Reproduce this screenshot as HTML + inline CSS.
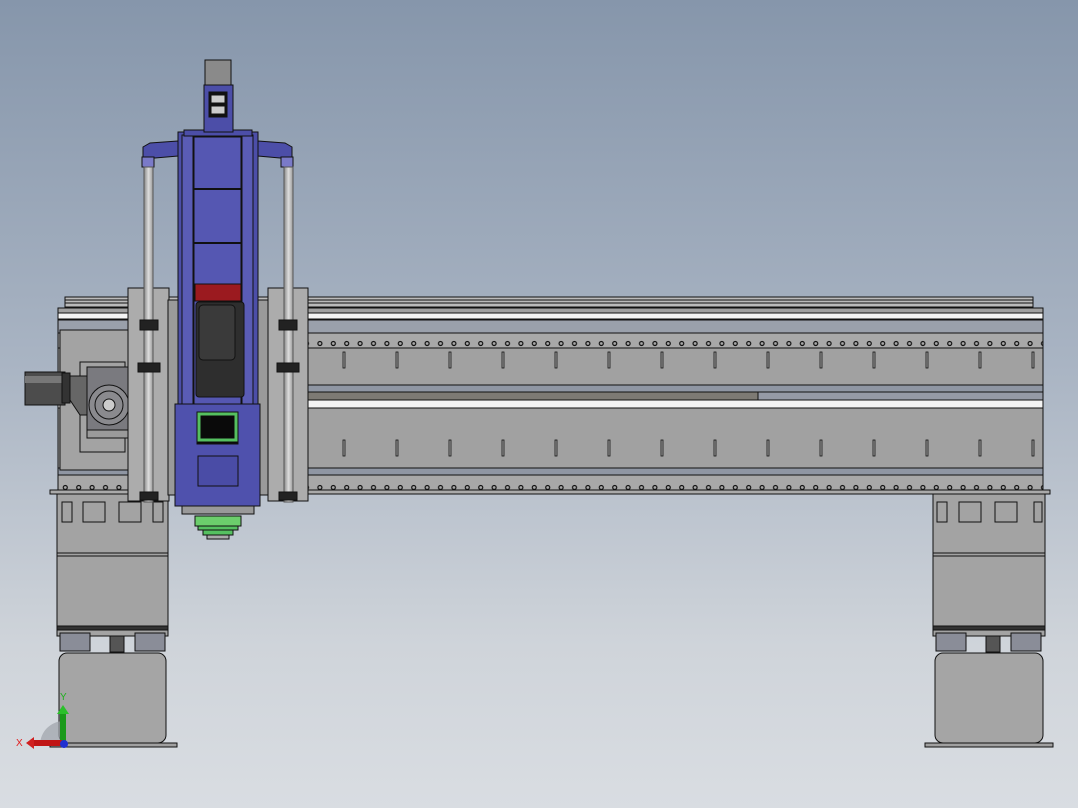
<!DOCTYPE html>
<html><head><meta charset="utf-8"><style>
html,body{margin:0;padding:0;width:1078px;height:808px;overflow:hidden}
body{background:linear-gradient(#8696ab 0%,#a9b4c3 45%,#cfd4da 80%,#d9dde2 100%)}
svg{position:absolute;left:0;top:0}
text{font-family:"Liberation Sans",sans-serif}
</style></head><body>
<svg width="1078" height="808" viewBox="0 0 1078 808">
<defs>
<pattern id="holes" x="5" y="0" width="13.4" height="16" patternUnits="userSpaceOnUse">
<circle cx="6.7" cy="7.5" r="2" fill="none" stroke="#111" stroke-width="1.2"/>
</pattern>
<pattern id="slots" x="0" y="349" width="53" height="36" patternUnits="userSpaceOnUse">
<rect x="25" y="3" width="2" height="16" fill="none" stroke="#111" stroke-width="0.8"/>
</pattern>
<pattern id="slots2" x="0" y="408" width="53" height="60" patternUnits="userSpaceOnUse">
<rect x="25" y="32" width="2" height="16" fill="none" stroke="#111" stroke-width="0.8"/>
</pattern>
<linearGradient id="rod" x1="0" x2="1"><stop offset="0" stop-color="#888"/><stop offset=".5" stop-color="#ddd"/><stop offset="1" stop-color="#999"/></linearGradient>
</defs>
<g stroke="#111" stroke-width="1">
<!-- legs -->
<rect x="57" y="493" width="111" height="143" fill="#a3a3a3"/>
<rect x="933" y="493" width="112" height="143" fill="#a3a3a3"/>
<g fill="none"><rect x="62" y="502" width="10" height="20"/><rect x="83" y="502" width="22" height="20"/><rect x="119" y="502" width="22" height="20"/><rect x="153" y="502" width="10" height="20"/>
<rect x="937" y="502" width="10" height="20"/><rect x="959" y="502" width="22" height="20"/><rect x="995" y="502" width="22" height="20"/><rect x="1034" y="502" width="8" height="20"/></g>
<line x1="57" y1="553" x2="168" y2="553"/><line x1="57" y1="556" x2="168" y2="556"/>
<line x1="933" y1="553" x2="1045" y2="553"/><line x1="933" y1="556" x2="1045" y2="556"/>
<rect x="57" y="626" width="111" height="4" fill="#333"/><rect x="933" y="626" width="112" height="4" fill="#333"/>
<rect x="60" y="633" width="30" height="18" fill="#8a8d98"/><rect x="135" y="633" width="30" height="18" fill="#8a8d98"/>
<rect x="936" y="633" width="30" height="18" fill="#8a8d98"/><rect x="1011" y="633" width="30" height="18" fill="#8a8d98"/>
<rect x="110" y="636" width="14" height="16" fill="#555"/><rect x="986" y="636" width="14" height="16" fill="#555"/>
<rect x="59" y="653" width="107" height="90" rx="8" fill="#a5a5a5"/>
<rect x="935" y="653" width="108" height="90" rx="8" fill="#a5a5a5"/>
<rect x="50" y="743" width="127" height="4" fill="#a0a0a0"/>
<rect x="925" y="743" width="128" height="4" fill="#a0a0a0"/>
<!-- beam -->
<rect x="65" y="297" width="968" height="10" fill="#bbb"/>
<line x1="65" y1="300" x2="1033" y2="300"/><line x1="65" y1="303" x2="1033" y2="303"/>
<rect x="58" y="308" width="985" height="185" fill="#a1a1a1"/>
<rect x="58" y="313" width="985" height="6" fill="#f4f4f4"/>
<rect x="58" y="320" width="985" height="13" fill="#9aa0ab"/>
<rect x="58" y="333" width="985" height="15" fill="#a8a8a8"/>
<rect x="58" y="333" width="985" height="15" fill="url(#holes)" stroke="none"/>
<rect x="58" y="349" width="985" height="36" fill="url(#slots)" stroke="none"/>
<rect x="58" y="385" width="985" height="7" fill="#8f96a3"/>
<rect x="58" y="392" width="700" height="8" fill="#7d7a74"/>
<rect x="758" y="392" width="285" height="8" fill="#959aa6"/>
<rect x="58" y="400" width="985" height="8" fill="#f4f4f4"/>
<rect x="58" y="408" width="985" height="60" fill="url(#slots2)" stroke="none"/>
<rect x="58" y="468" width="985" height="7" fill="#8f96a3"/>
<rect x="58" y="475" width="985" height="15" fill="#a8a8a8"/>
<rect x="58" y="475" width="985" height="15" fill="url(#holes)" stroke="none"/>
<rect x="50" y="490" width="1000" height="4" fill="#aaa"/>
<!-- left end box with gearbox -->
<rect x="60" y="330" width="68" height="140" fill="#a3a3a3"/>
<rect x="80" y="362" width="45" height="90" fill="none"/>
<rect x="25" y="372" width="40" height="33" fill="#4c4c4c"/>
<rect x="25" y="376" width="40" height="7" fill="#777" stroke="none"/>
<rect x="62" y="373" width="8" height="30" fill="#333"/>
<polygon points="70,376 88,376 88,415 80,415 70,400" fill="#666"/>
<rect x="87" y="367" width="44" height="70" fill="#7a7a7f"/>
<circle cx="109" cy="405" r="20" fill="#8a8a8e"/><circle cx="109" cy="405" r="14" fill="none"/><circle cx="109" cy="405" r="6" fill="#ccc"/>
<rect x="87" y="430" width="44" height="8" fill="#9a9a9a"/>
<!-- carriage plates -->
<rect x="128" y="288" width="41" height="213" fill="#acacac"/>
<rect x="268" y="288" width="40" height="213" fill="#acacac"/>
<rect x="168" y="300" width="12" height="195" fill="#9a9a9a"/>
<rect x="255" y="300" width="13" height="195" fill="#9a9a9a"/>
<!-- blue column -->
<rect x="178" y="132" width="80" height="370" fill="#4c4ea8"/>
<rect x="182" y="135" width="11" height="365" fill="#5a5cb5"/>
<rect x="242" y="135" width="11" height="365" fill="#5a5cb5"/>
<rect x="194" y="137" width="47" height="285" fill="#5557b2"/>
<line x1="194" y1="189" x2="241" y2="189" stroke-width="2"/><line x1="194" y1="243" x2="241" y2="243" stroke-width="2"/>
<rect x="195" y="284" width="46" height="17" fill="#9b1a1f"/>
<rect x="196" y="302" width="48" height="95" rx="3" fill="#2e2e2e"/>
<rect x="199" y="305" width="36" height="55" rx="4" fill="#3a3a3a"/>
<rect x="175" y="404" width="85" height="102" fill="#4f51ad"/>
<rect x="197" y="412" width="41" height="32" fill="#0a0a0a"/>
<rect x="199" y="414" width="37" height="26" fill="none" stroke="#55c060" stroke-width="3"/>
<rect x="198" y="456" width="40" height="30" fill="#4a4ca6"/>
<rect x="182" y="506" width="72" height="8" fill="#999"/>
<rect x="195" y="516" width="46" height="10" fill="#6cce6c"/>
<rect x="198" y="526" width="40" height="4" fill="#55c060"/>
<rect x="203" y="530" width="30" height="5" fill="#55c060"/>
<rect x="207" y="535" width="22" height="4" fill="#aaa"/>
<!-- top head -->
<rect x="184" y="130" width="68" height="6" fill="#4c4ea8"/>
<rect x="204" y="85" width="29" height="47" fill="#4c4ea8"/>
<rect x="209" y="92" width="18" height="25" fill="#111"/>
<rect x="211" y="95" width="14" height="8" fill="#ccc"/><rect x="211" y="106" width="14" height="8" fill="#ccc"/>
<rect x="205" y="60" width="26" height="25" fill="#8a8a8a"/>
<polygon points="178,141 150,143 143,147 143,158 155,158 178,156" fill="#4c4ea8"/>
<polygon points="258,141 285,143 292,147 292,158 280,158 258,156" fill="#4c4ea8"/>
<rect x="142" y="157" width="12" height="10" fill="#7a7ac8"/><rect x="281" y="157" width="12" height="10" fill="#7a7ac8"/>
<!-- rods -->
<rect x="144" y="167" width="9" height="335" fill="url(#rod)" stroke="#555"/>
<rect x="284" y="167" width="9" height="335" fill="url(#rod)" stroke="#555"/>
<rect x="140" y="320" width="18" height="10" fill="#222"/><rect x="279" y="320" width="18" height="10" fill="#222"/>
<rect x="138" y="363" width="22" height="9" fill="#222"/><rect x="277" y="363" width="22" height="9" fill="#222"/>
<rect x="140" y="492" width="18" height="8" fill="#222"/><rect x="279" y="492" width="18" height="8" fill="#222"/>
</g>
<!-- triad -->
<path d="M40,745 A24,24 0 0 1 64,721 L64,745 Z" fill="#9ea3aa" opacity=".7"/>
<rect x="60" y="712" width="6" height="32" fill="#1a9a1a"/><polygon points="57,714 63,705 69,714" fill="#2bc02b"/>
<rect x="32" y="740" width="30" height="6" fill="#c01515"/><polygon points="34,737 26,743 34,749" fill="#d02020"/>
<circle cx="64" cy="744" r="4" fill="#2030d0"/>
<text x="60" y="700" font-size="10" fill="#20b020">Y</text>
<text x="16" y="746" font-size="10" fill="#e02020">X</text>
</svg>
</body></html>
